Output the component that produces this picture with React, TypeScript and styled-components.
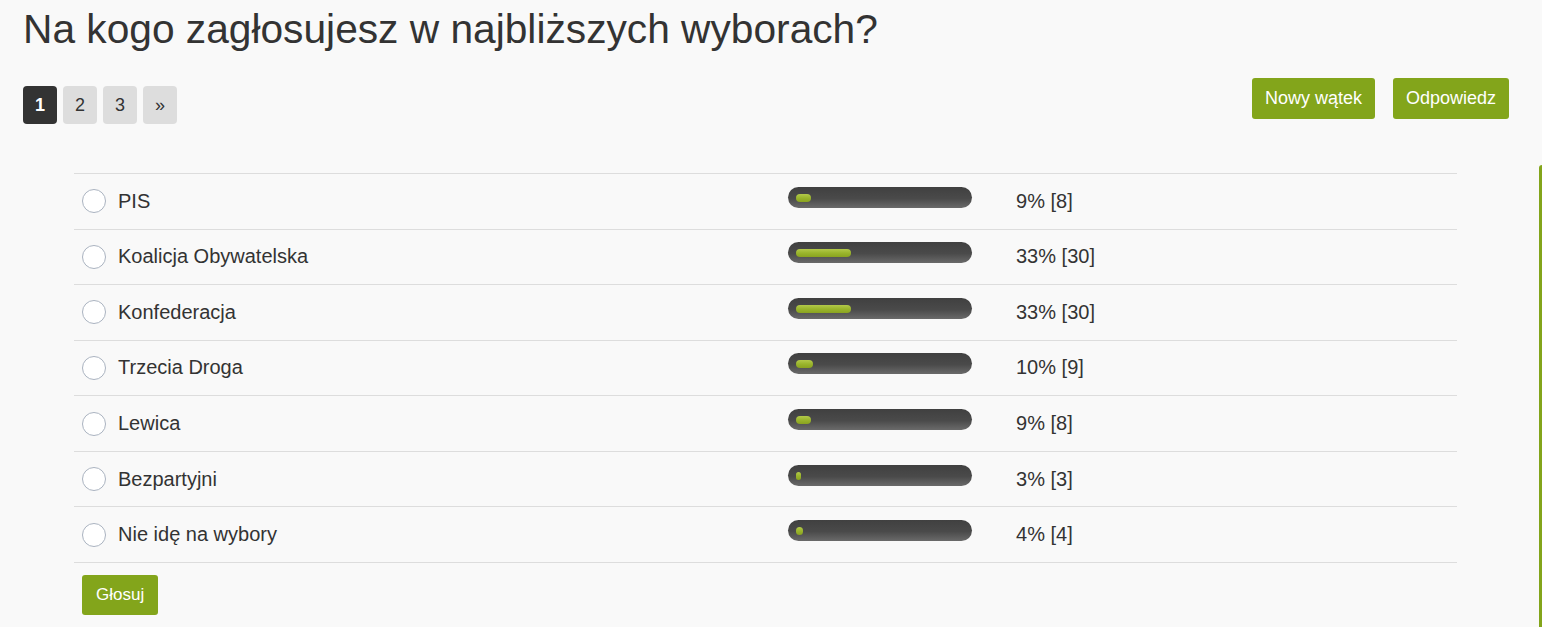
import React from "react";
import styled, { createGlobalStyle } from "styled-components";

const GlobalStyle = createGlobalStyle`
  html, body {
    margin: 0;
    padding: 0;
    background: #f9f9f9;
    overflow: hidden;
  }
  body {
    font-family: "Liberation Sans", Arial, sans-serif;
    color: #333;
  }
`;

const GREEN = "#83a51b";

const Layout = styled.div`
  display: flex;
  width: 1542px;
  height: 627px;
`;

const Main = styled.main`
  flex: 0 0 1539px;
  box-sizing: border-box;
  padding: 7px 30px 0 23px;
`;

const Aside = styled.aside`
  flex: 1 0 3px;
  margin-top: 165px;
  background: ${GREEN};
  border-top-left-radius: 3px;
`;

const Title = styled.h1`
  margin: 0;
  font-size: 40.7px;
  line-height: 44px;
  font-weight: 400;
  color: #333;
`;

const Toolbar = styled.div`
  display: flex;
  justify-content: space-between;
  align-items: flex-start;
  margin-top: 27px;
`;

const Pagination = styled.ul`
  display: flex;
  gap: 6px;
  list-style: none;
  margin: 8px 0 0;
  padding: 0;
`;

const PageItem = styled.li<{ $active?: boolean }>`
  width: 34px;
  height: 38px;
  border-radius: 4px;
  display: flex;
  align-items: center;
  justify-content: center;
  font-size: 18px;
  font-weight: ${(p) => (p.$active ? 700 : 400)};
  background: ${(p) => (p.$active ? "#333" : "#ddd")};
  color: ${(p) => (p.$active ? "#fff" : "#333")};
`;

const Actions = styled.div`
  display: flex;
  gap: 18px;
`;

const Button = styled.button`
  height: 41px;
  padding: 0 13px;
  border: 0;
  border-radius: 3px;
  background: ${GREEN};
  color: #fff;
  font-family: "Liberation Sans", Arial, sans-serif;
  font-size: 18px;
  cursor: pointer;
`;

const Poll = styled.div`
  margin: 49px 52px 0 51px;
  border-top: 1px solid #ddd;
`;

const Row = styled.div`
  box-sizing: border-box;
  height: 55.57px;
  display: grid;
  grid-template-columns: 44px 670px 228px 1fr;
  align-items: center;
  border-bottom: 1px solid #ddd;
`;

const Radio = styled.span`
  box-sizing: border-box;
  width: 24px;
  height: 24px;
  margin-left: 8px;
  border-radius: 50%;
  border: 1px solid #aab3c0;
  background: #fff;
`;

const Label = styled.span`
  font-size: 20px;
`;

const Track = styled.div`
  box-sizing: border-box;
  width: 184px;
  height: 21px;
  margin-bottom: 8px;
  border-radius: 11px;
  padding: 7px 8px 6px;
  background: linear-gradient(to bottom, #404040 0%, #4a4a4a 55%, #6a6a6a 100%);
`;

const Fill = styled.div`
  height: 8px;
  min-width: 4px;
  border-radius: 4px;
  background: linear-gradient(to bottom, #b3c94a 0%, #9ab52c 50%, #8aa31f 100%);
`;

const Percent = styled.span`
  font-size: 20px;
`;

const VoteButton = styled(Button)`
  height: 40px;
  padding: 0 14px;
  margin: 12px 0 0 8px;
  font-size: 17px;
`;

const options = [
  { name: "PIS", pct: 9, votes: 8 },
  { name: "Koalicja Obywatelska", pct: 33, votes: 30 },
  { name: "Konfederacja", pct: 33, votes: 30 },
  { name: "Trzecia Droga", pct: 10, votes: 9 },
  { name: "Lewica", pct: 9, votes: 8 },
  { name: "Bezpartyjni", pct: 3, votes: 3 },
  { name: "Nie idę na wybory", pct: 4, votes: 4 },
];

export default function App() {
  return (
    <>
      <GlobalStyle />
      <Layout>
        <Main>
          <Title>Na kogo zagłosujesz w najbliższych wyborach?</Title>
          <Toolbar>
            <Pagination>
              <PageItem $active>1</PageItem>
              <PageItem>2</PageItem>
              <PageItem>3</PageItem>
              <PageItem>»</PageItem>
            </Pagination>
            <Actions>
              <Button>Nowy wątek</Button>
              <Button>Odpowiedz</Button>
            </Actions>
          </Toolbar>
          <Poll>
            {options.map((o) => (
              <Row key={o.name}>
                <Radio />
                <Label>{o.name}</Label>
                <Track>
                  <Fill style={{ width: `${o.pct}%` }} />
                </Track>
                <Percent>
                  {o.pct}% [{o.votes}]
                </Percent>
              </Row>
            ))}
            <VoteButton>Głosuj</VoteButton>
          </Poll>
        </Main>
        <Aside />
      </Layout>
    </>
  );
}
